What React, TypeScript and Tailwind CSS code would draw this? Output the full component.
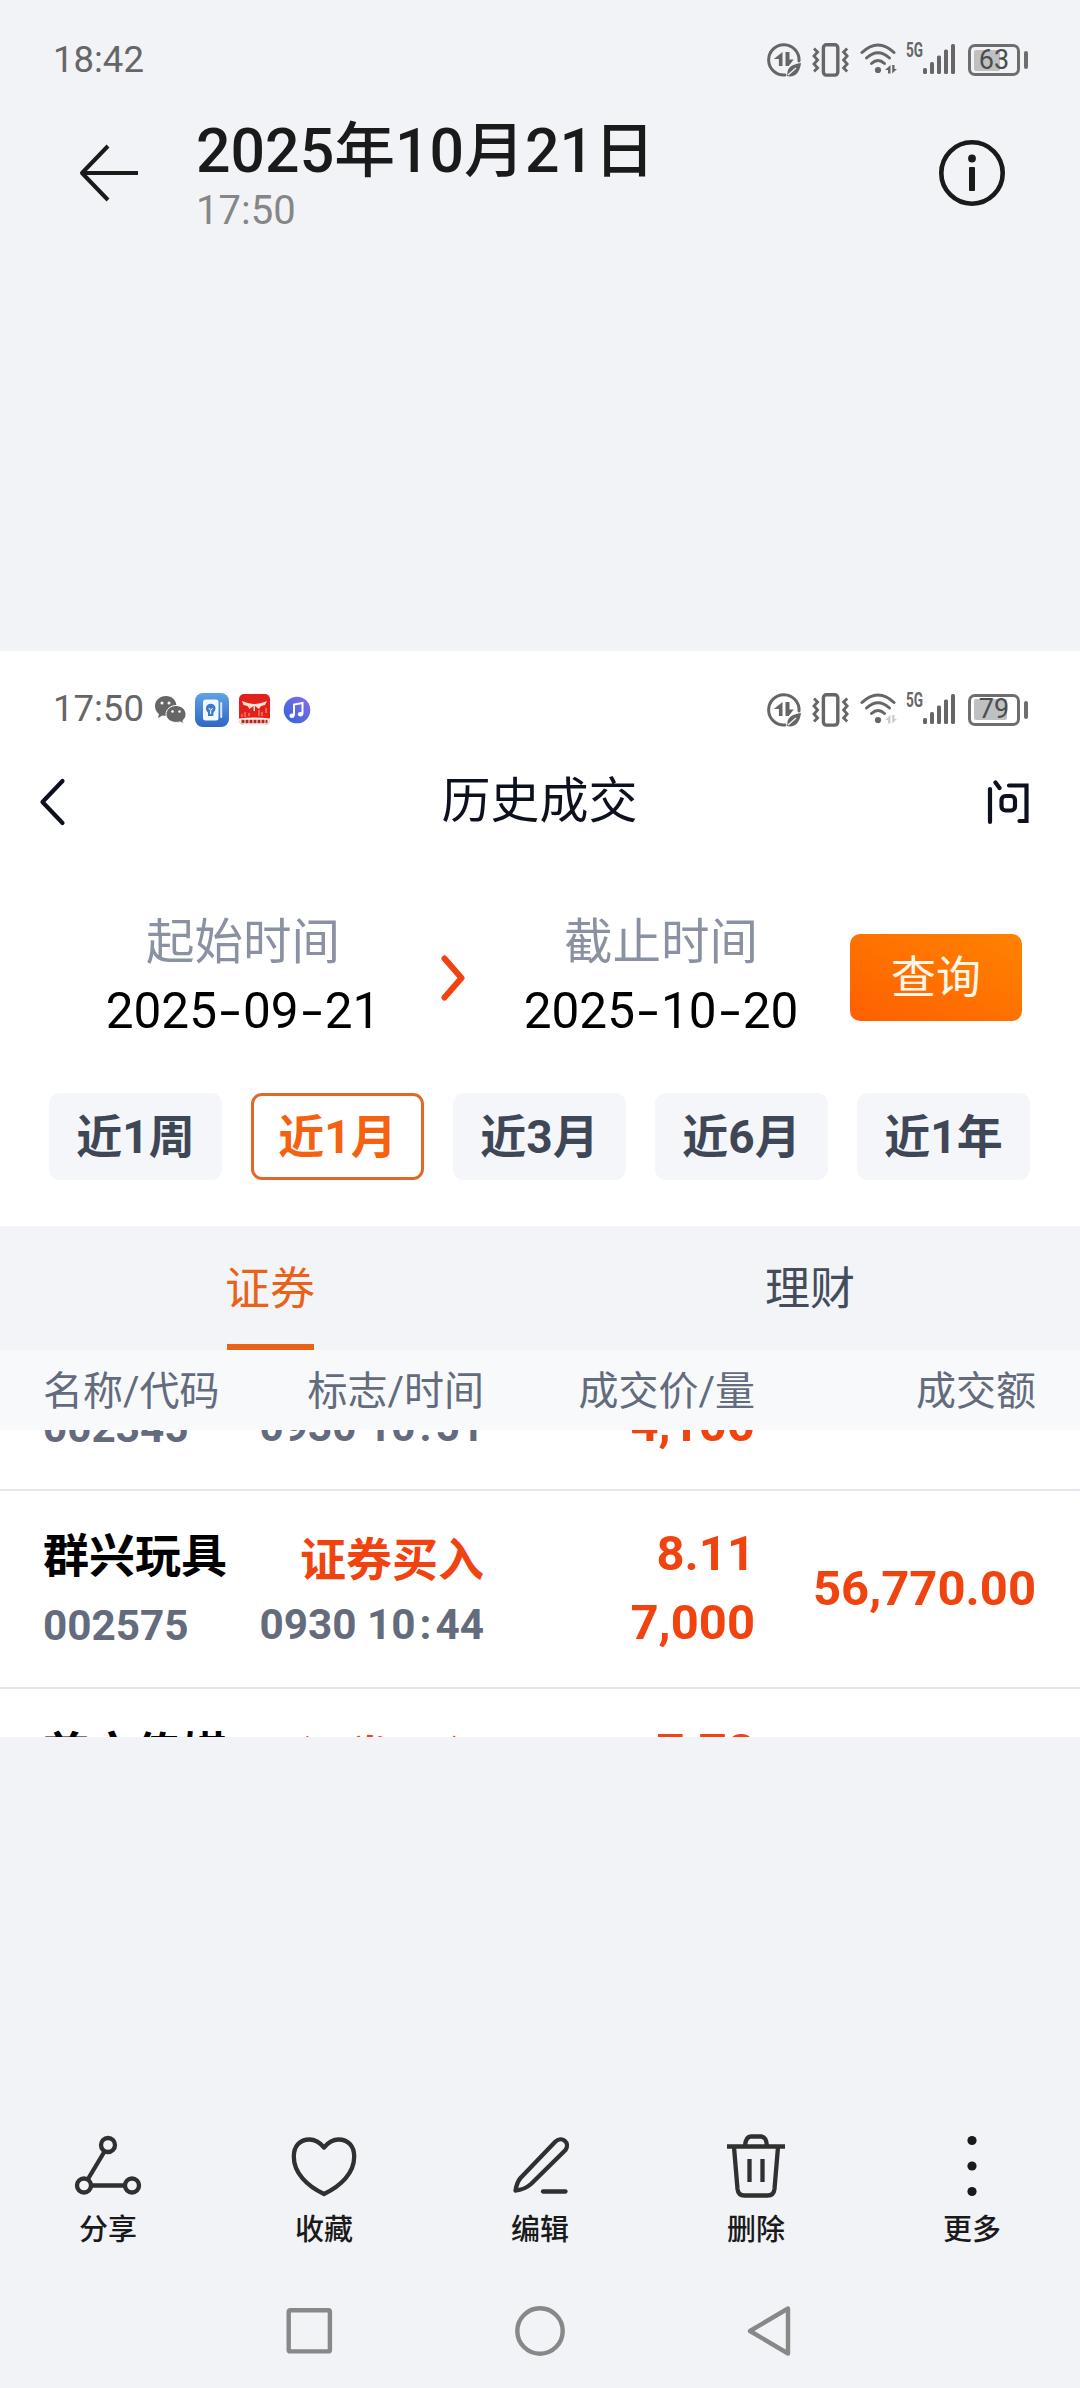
import clsx from 'clsx'
import type { ReactNode } from 'react'

interface Trade {
  name: string
  code: string
  side: string
  time: string
  price: string
  volume: string
  amount: string
}

const trades: Trade[] = [
  { name: '潮宏基', code: '002345', side: '证券买入', time: '0930 10:51', price: '13.85', volume: '4,100', amount: '56,785.00' },
  { name: '群兴玩具', code: '002575', side: '证券买入', time: '0930 10:44', price: '8.11', volume: '7,000', amount: '56,770.00' },
  { name: '慈文传媒', code: '002343', side: '证券买入', time: '0930 10:40', price: '7.78', volume: '7,300', amount: '56,794.00' },
]

const ranges = ['近1周', '近1月', '近3月', '近6月', '近1年']

function DataSaverIcon() {
  return (
    <svg width="34" height="34" viewBox="0 0 34 34" fill="none">
      <path d="M32 18A15.2 15.2 0 1 0 18 32" stroke="#666" strokeWidth="3" strokeLinecap="round" />
      <path d="M15.5 9v14h-3.6v-7H6.8z" fill="#666" />
      <path d="M18.5 9v14h3.2l5-6.5h-4.2V9z" fill="#666" />
      <path d="M34 20c-8 1-13 4-13.5 9l-.5 4 3 .5c6 0 10-5 11-13.500z" fill="#666" />
      <path d="M21 32l8-7" stroke="#f1f3f7" strokeWidth="1.300" />
    </svg>
  )
}

function VibrateIcon() {
  return (
    <svg width="37" height="34" viewBox="0 0 37 34" fill="none" stroke="#666">
      <rect x="11.400" y="1.700" width="14.400" height="30.400" rx="3" strokeWidth="3.400" />
      <path d="M2 5.500l3.600 3.500-3.600 4 3.600 4-3.600 4 3.600 4-3.600 3.500" strokeWidth="2.800" />
      <path d="M35.200 5.500L31.600 9l3.600 4-3.600 4 3.600 4-3.600 4 3.600 3.500" strokeWidth="2.800" />
    </svg>
  )
}

function WifiIcon({ idle }: { idle?: boolean }) {
  return (
    <svg width="38" height="34" viewBox="0 0 38 34" fill="none">
      <g stroke="#666" strokeWidth="3" strokeLinecap="round">
        <path d="M2 9.500Q18 -5.500 34 9.500" />
        <path d="M6.500 15Q18 4.500 29.500 15" />
        <path d="M11.500 20.500Q18 14.500 24.500 20.500" />
      </g>
      <circle cx="18" cy="27" r="3.100" fill="#666" />
      <g fill={idle ? '#ccc' : '#666'}>
        <path d="M30.500 22v8.500H28V27h-3z" />
        <path d="M32.200 22v8.500l4.800-4.500h-2.500V22z" />
      </g>
    </svg>
  )
}

function SignalIcon() {
  return (
    <svg width="50" height="34" viewBox="0 0 50 34" overflow="visible">
      <text x="0" y="14" fontSize="19.500" fontWeight="700" textLength="17" lengthAdjust="spacingAndGlyphs" fill="#666">
        5G
      </text>
      <g fill="#666">
        <rect x="17" y="25" width="4" height="6" rx="1.500" />
        <rect x="24" y="19" width="4" height="12" rx="1.500" />
        <rect x="31" y="12.500" width="4" height="18.500" rx="1.500" />
        <rect x="38" y="6.500" width="4" height="24.500" rx="1.500" />
        <rect x="45" y="1" width="4" height="30" rx="1.500" />
      </g>
    </svg>
  )
}

function Battery({ level }: { level: number }) {
  return (
    <div className="flex items-center gap-1">
      <div className="relative flex h-8 w-[52px] items-center rounded-[7px] border-[3px] border-[#6e6e6e] pl-[3px]">
        <div className="h-[21px] rounded-[2px] bg-[#bfc0c1]" style={{ width: level * 0.42 }} />
        <span className="absolute inset-0 flex items-center justify-center text-[27px] leading-none text-[#4d4d4d]">
          {level}
        </span>
      </div>
      <div className="h-[18px] w-1 rounded-full bg-[#6e6e6e]" />
    </div>
  )
}

function StatusIcons({ level, idle }: { level: number; idle?: boolean }) {
  return (
    <div className="flex items-center">
      <DataSaverIcon />
      <div className="ml-[11px]"><VibrateIcon /></div>
      <div className="ml-[11px]"><WifiIcon idle={idle} /></div>
      <div className="ml-2"><SignalIcon /></div>
      <div className="ml-3"><Battery level={level} /></div>
    </div>
  )
}

// Small icons of the apps that have pending notifications
function NotificationIcons() {
  return (
    <div className="flex items-center">
      <svg className="ml-[11px]" width="33" height="30" viewBox="0 0 33 30">
        <path d="M12 1C5.500 1 1 5.500 1 11c0 3.500 1.500 6 4 8l-1 4 4.500-2.500 4.500.5a10 10 0 0 1 9.500-10.500C22 5 18 1 12 1z" fill="#666" />
        <path d="M22 10.500c5.500 0 10 4 10 8.800 0 2.700-1.200 4.800-3.200 6.400l.8 3.100-3.600-1.900c-7.500 2-14-2-14-7.600 0-4.800 4.500-8.800 10-8.800z" fill="#666" stroke="#fff" strokeWidth="1" />
        <g fill="#fff">
          <circle cx="8" cy="8" r="1.500" />
          <circle cx="15" cy="8" r="1.500" />
          <circle cx="18.500" cy="16.500" r="1.300" />
          <circle cx="25.500" cy="16.500" r="1.300" />
        </g>
      </svg>
      <svg className="ml-2" width="34" height="34" viewBox="0 0 34 34">
        <defs>
          <linearGradient id="book" x1="0" y1="0" x2="0" y2="1">
            <stop offset="0" stopColor="#5fa3e6" />
            <stop offset="1" stopColor="#2f66c4" />
          </linearGradient>
        </defs>
        <rect width="34" height="34" rx="8" fill="url(#book)" />
        <rect x="8" y="6.500" width="15.500" height="21" rx="2.500" fill="#f2f8ff" />
        <rect x="25.200" y="9" width="2" height="16" rx="1" fill="#dcebfb" />
        <circle cx="15.700" cy="15.500" r="4.800" fill="#3d7bd0" />
        <path d="M13 18h5.400v5H13z" fill="#3d7bd0" />
        <path d="M13.800 15l1.900 2.500 1.900-2.500M15.700 17.500V21" stroke="#fff" strokeWidth="1" fill="none" />
      </svg>
      <svg className="ml-[10px]" width="31" height="31" viewBox="0 0 31 31">
        <rect width="31" height="31" rx="5" fill="#e3211c" />
        <path d="M3 7q7 3 12.500 3Q21 10 28 7l-2 4-4 1-2 3-4-3v5h-1.500v-5l-4 3-2-3-4-1z" fill="#ffe1d6" />
        <path d="M3 20v3M6 18v5M10 19v3M20 16v6M23 18v4M27 14v5" stroke="#f58a7a" strokeWidth="1.200" />
        <path d="M0 24.500q15.500-2 31 0V26a5 5 0 0 1-5 5H5a5 5 0 0 1-5-5z" fill="#fff0ea" />
        <path d="M2.500 27.500h26" stroke="#b3261e" strokeWidth="3.500" strokeDasharray="3 1" />
      </svg>
      <svg className="ml-3" width="30" height="30" viewBox="0 0 30 30">
        <defs>
          <linearGradient id="music" x1="0" y1="1" x2="1" y2="0">
            <stop offset="0" stopColor="#2f62dc" />
            <stop offset="1" stopColor="#8a6fe8" />
          </linearGradient>
        </defs>
        <circle cx="15" cy="15" r="13.300" fill="url(#music)" />
        <path d="M12 20.500V9.500l8.500-1.500v11" stroke="#fff" strokeWidth="2" fill="none" />
        <ellipse cx="10" cy="20.800" rx="2.600" ry="2.200" fill="#fff" />
        <ellipse cx="18.500" cy="19.300" rx="2.600" ry="2.200" fill="#fff" />
      </svg>
    </div>
  )
}

function DateField({ label, value }: { label: string; value: string }) {
  return (
    <div className="flex w-[300px] flex-col items-center whitespace-nowrap">
      <span className="h-[70px] text-[48.5px] leading-[74px] text-[#8a91a2]">{label}</span>
      <span className="flex h-[69px] text-[49.5px] leading-[71px] text-black">
        {value.split('').map((char, i) => (
          <span key={i} className={clsx(char === '-' && 'w-[26px] scale-x-150 text-center')}>
            {char}
          </span>
        ))}
      </span>
    </div>
  )
}

function TradeRow({ trade }: { trade: Trade }) {
  const [before, after] = trade.time.split(':')
  return (
    <div className="grid h-[198px] grid-cols-[189px_252px_271px_281px] items-center border-b-2 border-[#e4e6eb] pl-[43px] font-bold whitespace-nowrap">
      <div>
        <div className="h-[70px] text-[46px] leading-[74px] text-black">{trade.name}</div>
        <div className="h-[70px] text-[42.3px] leading-[73px] text-[#636b7c]">{trade.code}</div>
      </div>
      <div className="text-right">
        <div className="h-[70px] text-[46px] leading-[83px] text-[#f0430f]">{trade.side}</div>
        <div className="h-[70px] text-[42.3px] leading-[71px] text-[#636b7c]">
          {before}
          <span className="px-1">:</span>
          {after}
        </div>
      </div>
      <div className="text-right text-[49px] text-[#f0430f]">
        <div className="h-[70px] leading-[69px]">{trade.price}</div>
        <div className="h-[70px] leading-[68px]">{trade.volume}</div>
      </div>
      <div className="text-right text-[49px] text-[#f0430f]">{trade.amount}</div>
    </div>
  )
}

function ToolButton({ label, children }: { label: string; children: ReactNode }) {
  return (
    <button className="flex w-[216px] flex-col items-center">
      <svg width="72" height="72" viewBox="0 0 72 72" fill="none" stroke="#303030" strokeWidth="4.300">
        {children}
      </svg>
      <span className="mt-[5px] text-[29px] leading-[47px] font-medium text-[#1a1a1a]">{label}</span>
    </button>
  )
}

export default function App() {
  return (
    <div className="flex h-[2388px] w-[1080px] flex-col overflow-hidden bg-[#f1f3f7] font-[Roboto,'Noto_Sans_CJK_SC',sans-serif]">
      <div className="flex h-[120px] items-center justify-between pr-[52px] pl-[53px]">
        <span className="text-[36.5px] leading-none text-[#666]">18:42</span>
        <StatusIcons level={63} />
      </div>

      <header className="flex h-[120px] items-start pr-[75px] pl-[78px]">
        <svg className="mt-[23px]" width="62" height="60" viewBox="0 0 62 60" fill="none" stroke="#1a1a1a" strokeWidth="4">
          <path d="M60 30H5M30 3L4 30l26 27" strokeLinejoin="round" />
        </svg>
        <div className="ml-[56px] flex-1">
          <h1 className="h-[66px] text-[60.8px] leading-[64px] font-medium whitespace-nowrap text-[#1a1a1a]">2025年10月21日</h1>
          <p className="text-[40px] leading-[49px] text-[#868686]">17:50</p>
        </div>
        <svg className="mt-[19px]" width="68" height="68" viewBox="0 0 68 68" fill="none">
          <circle cx="35" cy="34" r="30.700" stroke="#1a1a1a" strokeWidth="4.600" />
          <circle cx="35" cy="19.500" r="3.900" fill="#1a1a1a" />
          <rect x="32" y="28" width="6" height="24" rx="1" fill="#1a1a1a" />
        </svg>
      </header>

      {/* Photo being viewed */}
      <main className="mt-[411px] h-[1086px] overflow-hidden bg-white">
        <div className="flex h-[117px] items-center justify-between pr-[52px] pl-[53px]">
          <div className="flex items-center">
            <span className="w-[90px] text-[36.5px] leading-none text-[#666]">17:50</span>
            <NotificationIcons />
          </div>
          <StatusIcons level={79} idle />
        </div>

        <div className="flex h-[67px] items-center justify-between pr-[50px] pl-[38px]">
          <svg width="28" height="48" viewBox="0 0 28 48" fill="none">
            <path d="M24.500 3L4.500 24l20 21" stroke="#0c111d" strokeWidth="4.200" strokeLinecap="round" strokeLinejoin="round" />
          </svg>
          <h2 className="pl-[26px] text-[49px] leading-[71px] text-[#0c111d]">历史成交</h2>
          <svg width="43" height="46" viewBox="0 0 43 46" fill="none" stroke="#0c111d" strokeWidth="4.200" strokeLinecap="round">
            <path d="M3 10v33M8.500 3.500l4 5.500M22 6.500h17.500V42H32.500" />
            <rect x="14.500" y="17" width="13.500" height="14.500" rx="4" />
          </svg>
        </div>

        <div className="mt-[71px] flex h-[139px] items-center pl-[93px]">
          <DateField label="起始时间" value="2025-09-21" />
          <svg className="mt-1 ml-[48px]" width="24" height="46" viewBox="0 0 24 46" fill="none">
            <path d="M3.500 3.500L20.500 23l-17 19.500" stroke="#f04310" strokeWidth="6" strokeLinecap="round" strokeLinejoin="round" />
          </svg>
          <div className="ml-[46px]">
            <DateField label="截止时间" value="2025-10-20" />
          </div>
          <button className="mt-1 ml-[39px] h-[87px] w-[172px] rounded-[10px] bg-linear-to-tr from-[#ff5f00] to-[#ff8200] text-[45px] leading-[90px] text-[#fff7ea]">
            查询
          </button>
        </div>

        <div className="mt-[48px] flex gap-[29px] pl-[49px]">
          {ranges.map((range) => (
            <button
              key={range}
              className={clsx(
                'flex h-[87px] w-[173px] items-center justify-center rounded-[11px] text-[46px] leading-[90px] font-bold',
                range === '近1月' ? 'border-[3px] border-[#e0692a] text-[#f5610f]' : 'bg-[#f4f6fa] text-[#3f4757]'
              )}
            >
              {range}
            </button>
          ))}
        </div>

        <div className="mt-[46px] grid h-[124px] grid-cols-2 bg-[#f2f4f8] text-[45px] leading-[127px]">
          <div className="flex flex-col items-center text-[#ea6118]">
            <span className="h-[118px]">证券</span>
            <span className="h-[6px] w-[87px] bg-[#ea6118]" />
          </div>
          <div className="text-center text-[#444c5b]">理财</div>
        </div>

        <div className="grid h-20 grid-cols-[189px_252px_271px_281px] bg-[#f7f9fb] pl-[43px] text-right text-[40px] leading-[84px] whitespace-nowrap text-[#636b7c]">
          <span className="text-left">名称/代码</span>
          <span>标志/时间</span>
          <span>成交价/量</span>
          <span>成交额</span>
        </div>

        <div className="h-[307px] overflow-hidden">
          <div className="-mt-[137px]">
            {trades.map((trade) => (
              <TradeRow key={trade.code} trade={trade} />
            ))}
          </div>
        </div>
      </main>

      <footer className="mt-[393px]">
        <div className="flex h-[150px]">
          <ToolButton label="分享">
            <circle cx="36" cy="15" r="7" />
            <circle cx="12" cy="55.500" r="7" />
            <circle cx="60" cy="55.500" r="7" />
            <path d="M32.500 21.500L16 49M19.500 55.500h33" />
          </ToolButton>
          <ToolButton label="收藏">
            <path
              d="M36 17.500C31 11.500 27 9.500 21.500 9.500 12 9.500 5.800 16 5.800 26.500 5.800 43 19 56 36 64 53 56 66.200 43 66.200 26.500 66.200 16 60 9.500 50.500 9.500 45 9.500 41 11.500 36 17.500z"
              strokeLinejoin="round"
            />
          </ToolButton>
          <ToolButton label="编辑">
            <path d="M11.500 60.500c1-6 2-9 5-12.500L51.500 11.500c6.500-6 15 1.500 10 8.500L27 54c-4.500 4-9 6-15.500 6.500z" strokeLinejoin="round" />
            <path d="M39 61.500h22.500" strokeLinecap="round" />
          </ToolButton>
          <ToolButton label="删除">
            <path d="M7 16.500h58M25 16c.5-6.500 2-9.500 6-9.500h10c4 0 5.500 3 6 9.500" />
            <path d="M14 17l3.500 42c.5 4.500 3 6.500 7 6.500h23c4 0 6.500-2 7-6.500L58 17M29.500 29v23M42.500 29v23" />
          </ToolButton>
          <ToolButton label="更多">
            <g fill="#1a1a1a" stroke="none">
              <circle cx="36" cy="10.500" r="4.600" />
              <circle cx="36" cy="36" r="4.600" />
              <circle cx="36" cy="61.500" r="4.600" />
            </g>
          </ToolButton>
        </div>

        <div className="mt-[24px] flex h-[54px] items-center justify-center gap-[176px] pr-[3px]">
          <svg width="54" height="54" viewBox="0 0 54 54" fill="none" stroke="#888" strokeWidth="4.400">
            <rect x="6.700" y="6.200" width="41.200" height="41.200" rx="1.500" />
          </svg>
          <svg width="54" height="54" viewBox="0 0 54 54" fill="none" stroke="#888" strokeWidth="4.400">
            <circle cx="28" cy="27" r="22.700" />
          </svg>
          <svg width="54" height="54" viewBox="0 0 54 54" fill="none" stroke="#888" strokeWidth="4.400" strokeLinejoin="round">
            <path d="M8 27L46 4.500v45z" />
          </svg>
        </div>
      </footer>
    </div>
  )
}
